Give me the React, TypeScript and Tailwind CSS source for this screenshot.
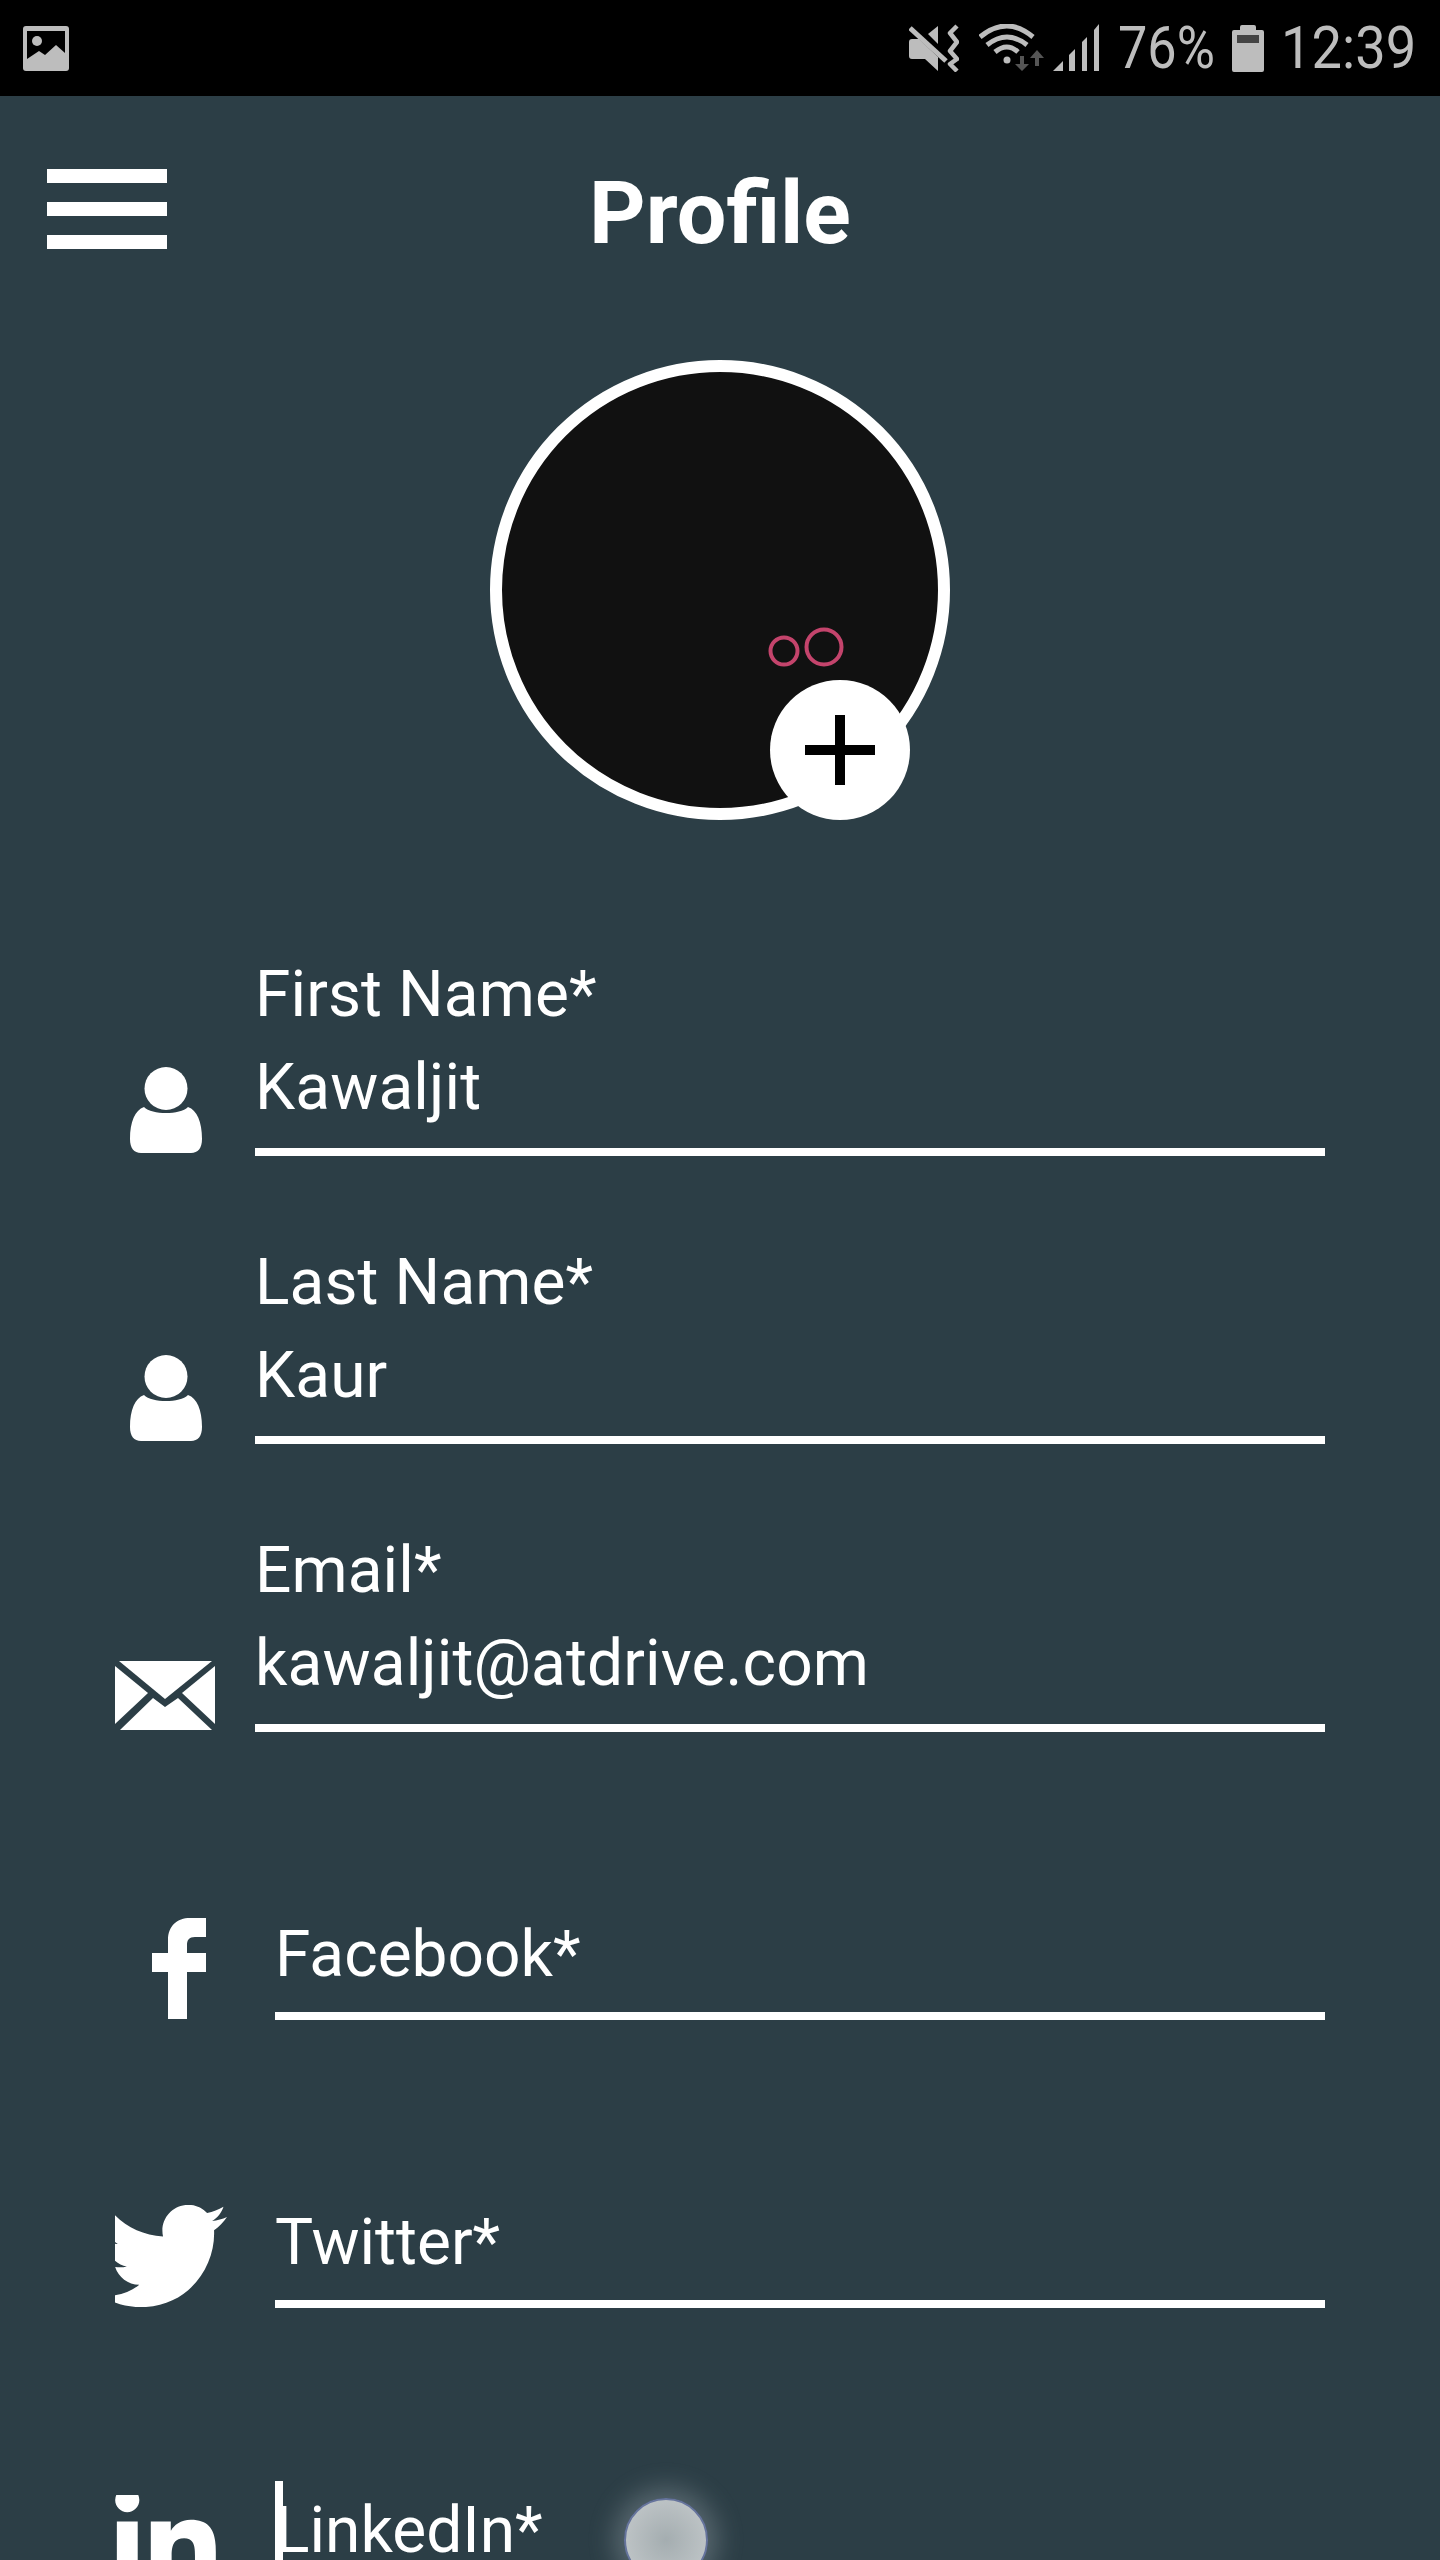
import type { ReactNode } from "react";
import { FaLinkedinIn, FaTwitter } from "react-icons/fa";

function PhotoIcon() {
  return (
    <svg width="46" height="45" viewBox="0 0 46 45">
      <rect width="46" height="45" rx="3" fill="#bdbdbd" />
      <path d="M4 5H42V27L33 19L22 29L16 25L4 33Z" fill="#000" />
      <circle cx="14" cy="15" r="5" fill="#bdbdbd" />
    </svg>
  );
}

function MuteIcon() {
  return (
    <svg width="50" height="48" viewBox="0 0 50 48">
      <path d="M19 10L29 2V20Z" fill="#bdbdbd" />
      <path d="M0 18Q0 15 3 15H10L29 33V47L16 35H3Q0 35 0 32Z" fill="#bdbdbd" />
      <path d="M1 4L37 37" stroke="#bdbdbd" strokeWidth="5" />
      <polyline points="48,2 41,9 48,18 41,27 48,35 41,40 48,47" stroke="#bdbdbd" strokeWidth="4.5" strokeLinejoin="round" fill="none" />
    </svg>
  );
}

function WifiIcon() {
  return (
    <svg width="66" height="48" viewBox="0 0 66 48">
      <path d="M1 13Q28 -9 54 13" stroke="#bdbdbd" strokeWidth="5" fill="none" />
      <path d="M8 21Q28 5 48 21" stroke="#bdbdbd" strokeWidth="5" fill="none" />
      <path d="M16 28Q28 18 39 28" stroke="#bdbdbd" strokeWidth="5" fill="none" />
      <circle cx="28" cy="36" r="3.5" fill="#bdbdbd" />
      <path d="M41 32H45V40H50L43 47L36 40H41Z" fill="#555" />
      <path d="M56 42H60V34H65L58 26L51 34H56Z" fill="#555" />
    </svg>
  );
}

function SignalIcon() {
  return (
    <svg width="48" height="48" viewBox="0 0 48 48">
      <path d="M1 47L11 37V47Z" fill="#bdbdbd" />
      <path d="M17 31L23 25V47H17Z" fill="#bdbdbd" />
      <path d="M30 18L35 13V47H30Z" fill="#bdbdbd" />
      <path d="M42 6L47 0V47H42Z" fill="#bdbdbd" />
    </svg>
  );
}

function BatteryIcon() {
  return (
    <svg width="32" height="47" viewBox="0 0 32 47">
      <path d="M8 5V2Q8 0 10 0H22Q24 0 24 2V5H30Q32 5 32 7V45Q32 47 30 47H2Q0 47 0 45V7Q0 5 2 5Z" fill="#bdbdbd" />
      <rect x="5" y="10" width="22" height="8" fill="#444" />
    </svg>
  );
}

function UserIcon() {
  return (
    <svg width="72" height="86" viewBox="0 0 72 86" className="ml-[130px] mb-[3px]">
      <circle cx="36" cy="21.5" r="21.5" fill="#fff" />
      <path d="M14 40C5 43 0 55 0 72C0 81 4 86 11 86H61C68 86 72 81 72 72C72 55 67 43 58 40C50 48 22 48 14 40Z" fill="#fff" />
    </svg>
  );
}

function MailIcon() {
  return (
    <svg width="100" height="69" viewBox="0 0 100 69" className="ml-[115px] mb-[2px]">
      <path d="M4 0H97L50 38Z" fill="#fff" />
      <path d="M0 5L33 32L0 63Z" fill="#fff" />
      <path d="M100 5L67 32L100 63Z" fill="#fff" />
      <path d="M5 69L38 37L50 46L63 37L97 69Z" fill="#fff" />
    </svg>
  );
}

function FacebookIcon() {
  return (
    <svg width="54" height="101" viewBox="0 0 54 101" className="ml-[152px] mb-px">
      <path d="M16 101V54H0V35H16V22C16 8 25 0 38 0H54V19H43C37 19 35 22 35 27V35H54V54H35V101Z" fill="#fff" />
    </svg>
  );
}

function TwitterIcon() {
  return (
    <div className="ml-[115px] mb-px w-[112px] h-[102px] overflow-hidden">
      <FaTwitter size={126} color="#fff" className="-ml-[14px] -mt-[12px]" />
    </div>
  );
}

function LinkedinIcon() {
  return (
    <div className="ml-[115px] w-[101px] h-[101px] overflow-hidden">
      <FaLinkedinIn size={115} color="#fff" className="-ml-[7px] -mt-[7px]" />
    </div>
  );
}

function Row({ icon, label, value, social, cursor }: { icon: ReactNode; label: string; value?: string; social?: boolean; cursor?: boolean }) {
  return (
    <div className="flex items-end h-[288px] pr-[115px]">
      <div className={social ? "w-[275px] shrink-0 flex items-end" : "w-[255px] shrink-0 flex items-end"}>{icon}</div>
      <div className="relative flex-1 border-b-8 border-white">
        {value ? (
          <>
            <div className="leading-[93px] tracking-[0.1px]">{label}</div>
            <div className="leading-[93px] pb-[14px] tracking-[0.12px]">{value}</div>
          </>
        ) : (
          <div className="leading-[93px] pb-[11px]">{label}</div>
        )}
        {cursor && <div className="absolute left-0 top-[-3px] w-[8px] h-[120px] bg-white" />}
      </div>
    </div>
  );
}

export default function App() {
  return (
    <div className="relative w-[1440px] h-[2560px] overflow-hidden bg-[#2c3e46] text-white text-[64px] font-['Roboto',sans-serif]">
      <div className="flex items-center justify-between h-[96px] bg-black pl-[23px] pr-[30px] text-[#bdbdbd]">
        <PhotoIcon />
        <div className="flex items-center">
          <MuteIcon />
          <div className="ml-[20px]"><WifiIcon /></div>
          <div className="ml-[7px]"><SignalIcon /></div>
          <div className="ml-[18px] w-[96px] text-[59px] font-normal leading-[96px] scale-x-[0.885] origin-left whitespace-nowrap">76%</div>
          <div className="ml-[18px]"><BatteryIcon /></div>
          <div className="ml-[17px] w-[129px] text-[59px] font-normal leading-[96px] scale-x-[0.92] origin-left whitespace-nowrap">12:39</div>
        </div>
      </div>

      <div className="grid grid-cols-[1fr_auto_1fr] items-start pt-[73px]">
        <div className="flex flex-col gap-[19px] w-[120px] ml-[47px]">
          <div className="h-[14px] bg-white" />
          <div className="h-[14px] bg-white" />
          <div className="h-[14px] bg-white" />
        </div>
        <div className="text-[88px] font-bold leading-[80px] pt-[4px]">Profile</div>
        <div />
      </div>

      <div className="relative w-[460px] h-[460px] mx-auto mt-[107px]">
        <div className="w-full h-full rounded-full border-[12px] border-white bg-[#111]" />
        <svg width="110" height="60" viewBox="0 0 110 60" className="absolute left-[260px] top-[260px]">
          <circle cx="34" cy="31" r="13.5" stroke="#c4446c" strokeWidth="4" fill="none" />
          <circle cx="74" cy="27" r="17.5" stroke="#c4446c" strokeWidth="4" fill="none" />
        </svg>
        <div className="absolute left-[280px] top-[320px] w-[140px] h-[140px] rounded-full bg-white flex items-center justify-center">
          <svg width="70" height="70" viewBox="0 0 70 70">
            <path d="M30 0H40V30H70V40H40V70H30V40H0V30H30Z" fill="#000" />
          </svg>
        </div>
      </div>

      <div className="mt-[48px]">
        <Row icon={<UserIcon />} label="First Name*" value="Kawaljit" />
        <Row icon={<UserIcon />} label="Last Name*" value="Kaur" />
        <Row icon={<MailIcon />} label="Email*" value="kawaljit@atdrive.com" />
        <Row social icon={<FacebookIcon />} label="Facebook*" />
        <Row social icon={<TwitterIcon />} label="Twitter*" />
        <Row social cursor icon={<LinkedinIcon />} label="LinkedIn*" />
      </div>

      <div className="absolute left-[624px] top-[2498px] w-[84px] h-[84px] rounded-full border-2 border-[#66749c] bg-[radial-gradient(circle,#a4adb0_0%,#c6cbcd_100%)] shadow-[0_0_26px_10px_rgba(190,200,205,0.3)]" />
    </div>
  );
}
